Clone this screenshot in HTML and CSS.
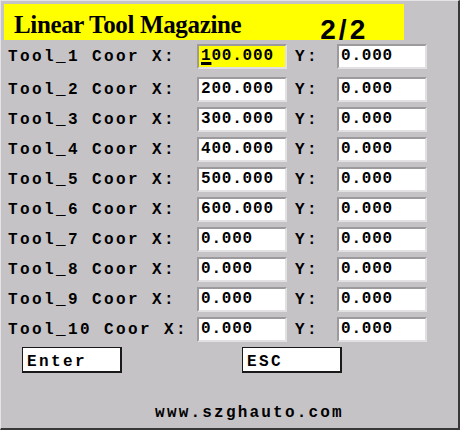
FILE: index.html
```html
<!DOCTYPE html>
<html>
<head>
<meta charset="utf-8">
<link rel="stylesheet" href="styles.css">
</head>
<body>
<div class="screen">
  <div class="title"><span class="title-text">Linear Tool Magazine</span><span class="page">2/2</span></div>
  <div class="rows">
    <div class="row first"><span class="label">Tool_1 Coor X:</span><div class="field active"><span class="cursor">1</span>00.000</div><span class="ylabel">Y:</span><div class="field">0.000</div></div>
    <div class="row"><span class="label">Tool_2 Coor X:</span><div class="field">200.000</div><span class="ylabel">Y:</span><div class="field">0.000</div></div>
    <div class="row"><span class="label">Tool_3 Coor X:</span><div class="field">300.000</div><span class="ylabel">Y:</span><div class="field">0.000</div></div>
    <div class="row"><span class="label">Tool_4 Coor X:</span><div class="field">400.000</div><span class="ylabel">Y:</span><div class="field">0.000</div></div>
    <div class="row"><span class="label">Tool_5 Coor X:</span><div class="field">500.000</div><span class="ylabel">Y:</span><div class="field">0.000</div></div>
    <div class="row"><span class="label">Tool_6 Coor X:</span><div class="field">600.000</div><span class="ylabel">Y:</span><div class="field">0.000</div></div>
    <div class="row"><span class="label">Tool_7 Coor X:</span><div class="field">0.000</div><span class="ylabel">Y:</span><div class="field">0.000</div></div>
    <div class="row"><span class="label">Tool_8 Coor X:</span><div class="field">0.000</div><span class="ylabel">Y:</span><div class="field">0.000</div></div>
    <div class="row"><span class="label">Tool_9 Coor X:</span><div class="field">0.000</div><span class="ylabel">Y:</span><div class="field">0.000</div></div>
    <div class="row"><span class="label">Tool_10 Coor X:</span><div class="field">0.000</div><span class="ylabel">Y:</span><div class="field">0.000</div></div>
  </div>
  <div class="buttons">
    <div class="btn btn-enter">Enter</div>
    <div class="btn btn-esc">ESC</div>
  </div>
  <div class="footer">www.szghauto.com</div>
</div>
</body>
</html>
```
FILE: styles.css
```css
html, body {
  margin: 0;
  padding: 0;
  background: #c6c3c6;
}
.screen {
  box-sizing: border-box;
  width: 460px;
  height: 430px;
  background: #c6c3c6;
  border-top: 1px solid #e6e4e6;
  border-left: 1px solid #e6e4e6;
  border-right: 2px solid #393839;
  border-bottom: 2px solid #393839;
  display: flex;
  flex-direction: column;
  font-family: "Liberation Mono", monospace;
  font-weight: bold;
  color: #000;
}
.title {
  margin: 3px 0 0 3px;
  width: 400px;
  height: 36px;
  background: #ffff00;
  display: flex;
  align-items: flex-start;
}
.title-text {
  font-family: "Liberation Serif", serif;
  font-weight: bold;
  font-size: 25px;
  letter-spacing: -0.35px;
  line-height: 28px;
  margin: 7px 0 0 10px;
}
.page {
  font-family: "Liberation Sans", sans-serif;
  font-weight: bold;
  font-size: 28px;
  letter-spacing: 3px;
  margin: 11px 0 0 79px;
  line-height: 30px;
}
.rows {
  display: flex;
  flex-direction: column;
  gap: 5px;
  margin-top: 4px;
  padding-left: 7px;
}
.row {
  display: grid;
  grid-template-columns: 189px 90px 50px 90px;
  height: 25px;
  align-items: center;
}
.row.first {
  margin-bottom: 3px;
}
.label, .ylabel {
  font-size: 16px;
  letter-spacing: 2.4px;
  white-space: nowrap;
}
.ylabel {
  padding-left: 8px;
}
.field {
  box-sizing: border-box;
  height: 25px;
  background: #fff;
  border-top: 2px solid #9c9a9c;
  border-left: 2px solid #9c9a9c;
  border-right: 2px solid #e2e0e2;
  border-bottom: 2px solid #e2e0e2;
  font-size: 16px;
  letter-spacing: 0.8px;
  padding-left: 2px;
  line-height: 20px;
  white-space: nowrap;
}
.field.active {
  background: #ffff00;
}
.cursor {
  text-decoration: underline;
  text-decoration-thickness: 3px;
  text-underline-offset: 2px;
}
.buttons {
  display: flex;
  margin-top: 5px;
  padding-left: 21px;
  gap: 120px;
}
.btn {
  box-sizing: border-box;
  width: 100px;
  height: 26px;
  background: #fff;
  border: 1px solid #1a1a1a;
  border-right-width: 2px;
  border-bottom-width: 2px;
  font-size: 16px;
  letter-spacing: 2.4px;
  padding: 3px 0 0 4px;
  line-height: 22px;
}
.footer {
  margin-top: 31px;
  text-align: center;
  padding-left: 40px;
  font-size: 16px;
  letter-spacing: 2.2px;
}
```
